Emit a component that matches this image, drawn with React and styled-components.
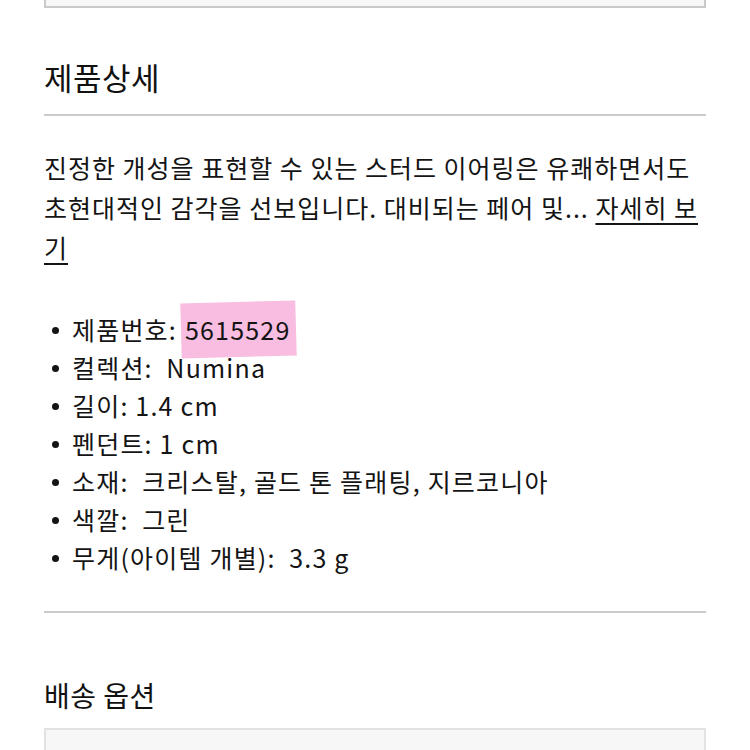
import React from 'react'
import styled, {createGlobalStyle} from 'styled-components'

const GlobalStyle = createGlobalStyle`
  body {
    margin: 0;
    background: #ffffff;
    font-family: "Noto Sans CJK KR", "Noto Sans", sans-serif;
    color: #141414;
  }
`

const Page = styled.div`
  width: 662px;
  padding: 0 44px;
`

const TopPanel = styled.div`
  height: 6px;
  background: #f7f7f7;
  border: 2px solid #c9c9c9;
  border-top: none;
`

const SectionTitle = styled.h2`
  margin: ${props => props.margin};
  font-size: ${props => props.size};
  line-height: ${props => props.lineHeight};
  letter-spacing: ${props => props.spacing};
  font-weight: 400;
  color: #111;
`

const Divider = styled.hr`
  margin: ${props => props.margin};
  border: none;
  height: 2px;
  background: #cbcbcb;
`

const Description = styled.p`
  margin: 31px 0 0;
  font-size: 25px;
  line-height: 40px;
  white-space: nowrap;
  letter-spacing: 1px;
`

const MoreLink = styled.a`
  color: #141414;
  text-decoration: underline;
  text-underline-offset: 5px;
  text-decoration-thickness: 1.5px;
`

const SpecList = styled.ul`
  list-style: none;
  margin: 43px 0 0;
  padding: 0;
`

const SpecItem = styled.li`
  display: flex;
  align-items: center;
  height: 38px;
  font-size: 25px;
  letter-spacing: 1.2px;
  white-space: pre;
  &::before {
    content: "";
    width: 7px;
    height: 7px;
    border-radius: 50%;
    background: #141414;
    margin: 2px 13px 0 8px;
    flex: none;
  }
`

const Highlight = styled.span`
  position: relative;
  z-index: 0;
  margin-left: 8px;
  &::before {
    content: "";
    position: absolute;
    z-index: -1;
    left: -4px;
    right: -5px;
    top: -9px;
    bottom: -10px;
    background: #f8bde0;
    transform: rotate(-1.6deg);
  }
`

const OptionPanel = styled.div`
  height: 40px;
  margin-top: 16px;
  background: #f7f7f7;
  border: 2px solid #e2e2e2;
  border-bottom: none;
`

const specs = [
  ['컬렉션:  ', 'Numina'],
  ['길이: ', '1.4 cm'],
  ['펜던트: ', '1 cm'],
  ['소재:  ', '크리스탈, 골드 톤 플래팅, 지르코니아'],
  ['색깔:  ', '그린'],
  ['무게(아이템 개별):  ', '3.3 g'],
]

export default function App() {
  return (
    <Page>
      <GlobalStyle />
      <TopPanel />
      <SectionTitle margin="51px 0 0" size="31px" lineHeight="36px" spacing="0.5px">제품상세</SectionTitle>
      <Divider margin="19px 0 0" />
      <Description>
        진정한 개성을 표현할 수 있는 스터드 이어링은 유쾌하면서도<br />
        초현대적인 감각을 선보입니다. 대비되는 페어 및...{' '}
        <MoreLink href="#">자세히 보<br />기</MoreLink>
      </Description>
      <SpecList>
        <SpecItem>제품번호:<Highlight>5615529</Highlight></SpecItem>
        {specs.map(([label, value]) => (
          <SpecItem key={label}>{label}{value}</SpecItem>
        ))}
      </SpecList>
      <Divider margin="35px 0 0" />
      <SectionTitle margin="65px 0 0" size="28px" lineHeight="34px" spacing="0.5px">배송 옵션</SectionTitle>
      <OptionPanel />
    </Page>
  )
}
